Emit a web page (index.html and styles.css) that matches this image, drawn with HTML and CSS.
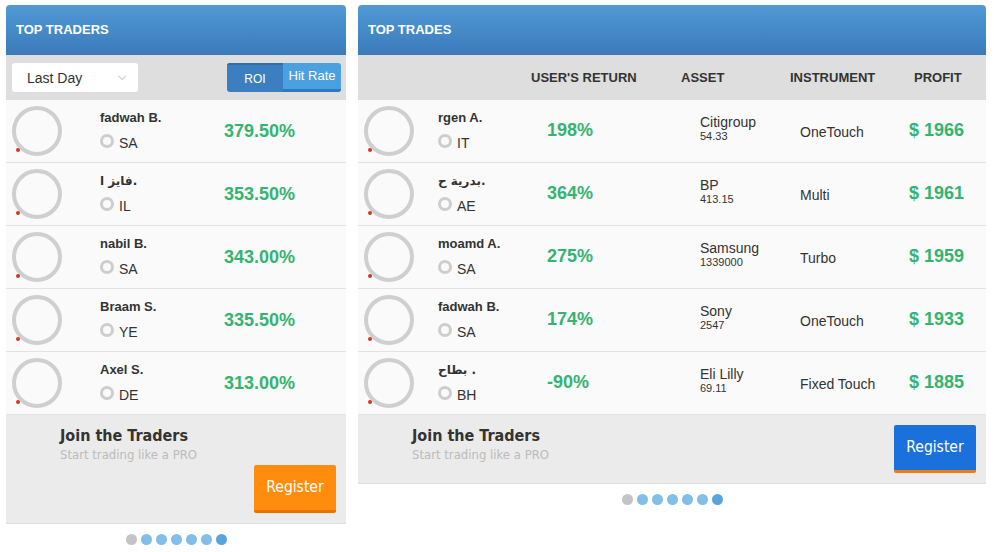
FILE: index.html
```html
<!DOCTYPE html>
<html>
<head>
	<title>Top Traders</title>
	<link rel="stylesheet" href="styles.css">
</head>
<body>
	<div id="content">

		<!-- ############ TOP TRADERS ############ -->
		<div class="col traders">
			<div class="panel">
				<div class="head">TOP TRADERS</div>
				<div class="tools">
					<div class="select">Last Day <span class="chev"></span></div>
					<div class="toggle">
						<span class="on">ROI</span><span class="off">Hit Rate</span>
					</div>
				</div>

				<div class="row">
					<div class="ava"><i></i></div>
					<div class="who"><b>fadwah B.</b><span class="cc"><i></i>SA</span></div>
					<div class="pct">379.50%</div>
				</div>
				<div class="row">
					<div class="ava"><i></i></div>
					<div class="who"><b class="ar">فايز ا.</b><span class="cc"><i></i>IL</span></div>
					<div class="pct">353.50%</div>
				</div>
				<div class="row">
					<div class="ava"><i></i></div>
					<div class="who"><b>nabil B.</b><span class="cc"><i></i>SA</span></div>
					<div class="pct">343.00%</div>
				</div>
				<div class="row">
					<div class="ava"><i></i></div>
					<div class="who"><b>Braam S.</b><span class="cc"><i></i>YE</span></div>
					<div class="pct">335.50%</div>
				</div>
				<div class="row">
					<div class="ava"><i></i></div>
					<div class="who"><b>Axel S.</b><span class="cc"><i></i>DE</span></div>
					<div class="pct">313.00%</div>
				</div>

				<div class="foot stack">
					<div class="join">
						<h4>Join the Traders</h4>
						<p>Start trading like a PRO</p>
					</div>
					<a class="btn orange">Register</a>
				</div>
			</div>
			<div class="dots"><i class="off"></i><i></i><i></i><i></i><i></i><i></i><i class="cur"></i></div>
		</div>

		<!-- ############ TOP TRADES ############ -->
		<div class="col trades">
			<div class="panel">
				<div class="head">TOP TRADES</div>
				<div class="thead">
					<span class="h-ret">USER'S RETURN</span>
					<span class="h-asset">ASSET</span>
					<span class="h-inst">INSTRUMENT</span>
					<span class="h-prof">PROFIT</span>
				</div>

				<div class="row">
					<div class="ava"><i></i></div>
					<div class="who"><b>rgen A.</b><span class="cc"><i></i>IT</span></div>
					<div class="ret">198%</div>
					<div class="asset">Citigroup<small>54.33</small></div>
					<div class="inst">OneTouch</div>
					<div class="prof">$ 1966</div>
				</div>
				<div class="row">
					<div class="ava"><i></i></div>
					<div class="who"><b class="ar">بدرية ح.</b><span class="cc"><i></i>AE</span></div>
					<div class="ret">364%</div>
					<div class="asset">BP<small>413.15</small></div>
					<div class="inst">Multi</div>
					<div class="prof">$ 1961</div>
				</div>
				<div class="row">
					<div class="ava"><i></i></div>
					<div class="who"><b>moamd A.</b><span class="cc"><i></i>SA</span></div>
					<div class="ret">275%</div>
					<div class="asset">Samsung<small>1339000</small></div>
					<div class="inst">Turbo</div>
					<div class="prof">$ 1959</div>
				</div>
				<div class="row">
					<div class="ava"><i></i></div>
					<div class="who"><b>fadwah B.</b><span class="cc"><i></i>SA</span></div>
					<div class="ret">174%</div>
					<div class="asset">Sony<small>2547</small></div>
					<div class="inst">OneTouch</div>
					<div class="prof">$ 1933</div>
				</div>
				<div class="row">
					<div class="ava"><i></i></div>
					<div class="who"><b class="ar">بطاح .</b><span class="cc"><i></i>BH</span></div>
					<div class="ret">-90%</div>
					<div class="asset">Eli Lilly<small>69.11</small></div>
					<div class="inst">Fixed Touch</div>
					<div class="prof">$ 1885</div>
				</div>

				<div class="foot">
					<div class="join">
						<h4>Join the Traders</h4>
						<p>Start trading like a PRO</p>
					</div>
					<a class="btn blue">Register</a>
				</div>
			</div>
			<div class="dots"><i class="off"></i><i></i><i></i><i></i><i></i><i></i><i class="cur"></i></div>
		</div>

	</div>
</body>
</html>
```

FILE: styles.css
```css
body { margin: 0; background: #fff; font-family: "Liberation Sans", Arial, "DejaVu Sans", sans-serif; color: #333; }
#content { display: flex; align-items: flex-start; gap: 12px; padding: 5px 6px; }

.traders { width: 340px; }
.trades  { width: 628px; }

.panel { background: #fafafa; }

.head {
	height: 50px;
	line-height: 50px;
	padding-left: 10px;
	color: #fff;
	font-size: 13px;
	font-weight: bold;
	background: linear-gradient(#5199d6, #3b7bba);
	border-radius: 4px 4px 0 0;
}

/* ---- toolbar (left) ---- */
.tools {
	height: 45px;
	background: #dedede;
	display: flex;
	justify-content: space-between;
	align-items: center;
	padding: 0 5px 0 6px;
}
.select {
	position: relative;
	width: 111px;
	height: 29px;
	line-height: 30px;
	padding-left: 15px;
	background: #fff;
	border-radius: 3px;
	font-size: 14px;
	color: #333;
}
.chev {
	position: absolute;
	right: 13px; top: 10px;
	width: 5px; height: 5px;
	border-right: 1px solid #ccc;
	border-bottom: 1px solid #ccc;
	transform: rotate(45deg);
}
.toggle { display: flex; height: 29px; border-radius: 3px; overflow: hidden; color: #fff; }
.toggle span { display: block; text-align: center; }
.toggle .on {
	width: 56px;
	font-size: 12px;
	line-height: 28px;
	background: #3c7fc1;
	border-top: 2px solid #2f6eaa;
	box-sizing: border-box;
}
.toggle .off {
	width: 58px;
	font-size: 13px;
	line-height: 25px;
	background: #4aa0e0;
	border-bottom: 3px solid #2f7abd;
	box-sizing: border-box;
}

/* ---- table head (right) ---- */
.thead {
	height: 45px;
	background: #dedede;
	display: flex;
	align-items: center;
	padding-left: 173px;
	font-size: 13px;
	font-weight: bold;
	color: #333;
}
.h-ret   { width: 150px; }
.h-asset { width: 109px; }
.h-inst  { width: 124px; }

/* ---- rows ---- */
.row {
	height: 62px;
	display: flex;
	align-items: center;
	border-bottom: 1px solid #e2e2e2;
	background: #fafafa;
}
.ava {
	position: relative;
	width: 42px; height: 42px;
	margin-left: 6px;
	border: 4px solid #cfcfcf;
	border-radius: 50%;
	flex: none;
}
.ava i {
	position: absolute;
	left: 0; bottom: 0;
	width: 4px; height: 4px;
	border-radius: 50%;
	background: #d8322a;
}
.who { display: flex; flex-direction: column; width: 124px; margin-left: 38px; }
.who b { font-size: 13px; line-height: 16px; color: #333; }
.who b.ar { font-family: "DejaVu Sans", sans-serif; font-size: 12px; }
.cc { display: flex; align-items: center; font-size: 14px; line-height: 18px; margin-top: 8px; }
.cc i {
	width: 8px; height: 8px;
	border: 3px solid #cdcdcd;
	border-radius: 50%;
	margin: -5px 5px 0 0;
}
.pct, .ret, .prof { font-size: 18px; font-weight: bold; color: #34b470; }

.trades .who { width: 109px; margin-left: 24px; }
.ret   { width: 153px; margin-top: -2px; }
.asset { width: 100px; font-size: 14px; line-height: 15px; margin-top: -4px; }
.asset small { display: block; font-size: 11px; line-height: 13px; color: #333; }
.inst  { width: 109px; font-size: 14px; margin-top: 2px; }
.prof  { margin-top: -2px; }

/* ---- footer ---- */
.foot {
	display: flex;
	justify-content: space-between;
	align-items: flex-start;
	background: #ebebeb;
	padding: 10px 10px 10px 54px;
	border-bottom: 1px solid #dcdcdc;
}
.foot.stack { flex-direction: column; }
.foot.stack .btn { align-self: flex-end; margin-top: 3px; }
.join h4 {
	margin: 1px 0 0;
	font-family: "DejaVu Sans Condensed", "DejaVu Sans", sans-serif;
	font-size: 16px;
	color: #333;
}
.join p {
	margin: 2px 0 0;
	font-family: "DejaVu Sans Condensed", "DejaVu Sans", sans-serif;
	font-size: 13px;
	color: #bbb;
}
.btn {
	display: block;
	width: 82px;
	height: 45px;
	line-height: 45px;
	text-align: center;
	color: #fff;
	font-family: "DejaVu Sans Condensed", "DejaVu Sans", sans-serif;
	font-size: 15.5px;
	border-radius: 2px;
}
.orange { background: #ff8c0c; border-bottom: 3px solid #ec6f00; }
.blue   { background: #1a71dc; border-bottom: 3px solid #f27a0f; }

/* ---- pager dots ---- */
.dots { display: flex; justify-content: center; gap: 4px; margin-top: 10px; }
.dots i { width: 11px; height: 11px; border-radius: 50%; background: #82bee8; }
.dots i.off { background: #c4c4c4; }
.dots i.cur { background: #5aa3db; }
```
